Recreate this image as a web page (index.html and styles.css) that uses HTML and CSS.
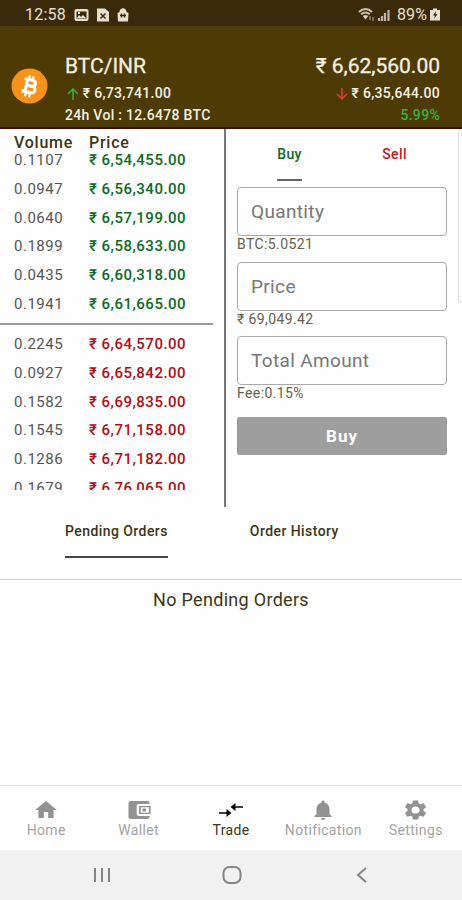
FILE: index.html
```html
<!DOCTYPE html>
<html lang="en">
<head>
    <meta charset="UTF-8">
    <meta name="viewport" content="width=device-width, initial-scale=1.0">
    <title>BTC/INR Trade</title>
    <link rel="stylesheet" href="styles.css">
</head>
<body>

    <div class="status">
        <span class="time">12:58</span>
        <svg width="15" height="14" viewBox="0 0 15 14"><rect x="0.5" y="1" width="14" height="12" rx="2" fill="#e6e0d2"/><path d="M2.500 3.500h10v7h-10z" fill="#3b2a09"/><path d="M3 10l2-3 2 2 2-2 3 3zM4 4h2v2H4z" fill="#e6e0d2"/></svg>
        <svg width="12" height="14" viewBox="0 0 12 14"><path d="M0 .5h8l4 3.500v9.500H0z" fill="#e6e0d2"/><path d="M3.500 5.500l5 5M8.500 5.500l-5 5" stroke="#3b2a09" stroke-width="1.500"/></svg>
        <svg width="12" height="14" viewBox="0 0 12 14"><path d="M.5 5l2-1c0-5 7-5 7 0l2 1-.5 8.500H1z" fill="#e6e0d2"/><path d="M3 7.500h6M4.500 5.500v4M7.500 5.500v4" stroke="#3b2a09" stroke-width="1.300"/></svg>
        <span class="fill"></span>
        <svg width="17" height="13" viewBox="0 0 17 13"><path d="M1 4c4-4 9-4 13 0M3.200 6.300c3-2.600 5.600-2.600 8.600 0" fill="none" stroke="#c9c0ae" stroke-width="2"/><path d="M4.800 8c2-1.300 3.400-1.300 5.400 0l-2.700 3.500z" fill="#d9d1c1"/><path d="M12 8v4M15 9v4" stroke="#8f8570" stroke-width="1.400"/></svg>
        <svg class="signal" width="12" height="12" viewBox="0 0 12 12"><path d="M1 12V9M4 12V7M7 12V4M10.500 12V1" stroke="#bdb5a3" stroke-width="2.200"/></svg>
        <span class="battery">89%</span>
        <svg width="10" height="13" viewBox="0 0 10 13"><path d="M0 2h3V.5h4V2h3v10.500H0z" fill="#e6e0d2"/><path d="M6 3L3 7.500h2L4 11l3.500-5H5.500z" fill="#3b2a09"/></svg>
    </div>

    <div class="header">
        <svg class="coin" width="37" height="36" viewBox="0 0 37 36">
            <ellipse cx="18.500" cy="18" rx="18" ry="17.500" fill="#f7931a"/>
            <g transform="rotate(13 18.500 18)" fill="none" stroke="#fff">
                <path d="M12 11.800h8c5 0 5 6 0 6h-5M15.300 11.800v12.500M12 24.300h8.500c5.500 0 5.500-6.700 0-6.700" stroke-width="3.200"/>
                <path d="M16.500 7.500v4M20.500 7.500v4M16.500 25v4M20.500 25v4" stroke-width="2.200"/>
            </g>
        </svg>
        <div class="pair">
            <div class="big">BTC/INR</div>
            <div class="small"><svg width="12" height="12" viewBox="0 0 12 12"><path d="M6 12V1M1 6l5-5 5 5" fill="none" stroke="#35b33c" stroke-width="1.500"/></svg> ₹ 6,73,741.00</div>
            <div class="small vol">24h Vol : 12.6478 BTC</div>
        </div>
        <div class="last">
            <div class="big">₹ 6,62,560.00</div>
            <div class="small"><svg width="12" height="12" viewBox="0 0 12 12"><path d="M6 0v11M1 6l5 5 5-5" fill="none" stroke="#e0402b" stroke-width="1.500"/></svg> ₹ 6,35,644.00</div>
            <div class="small change">5.99%</div>
        </div>
    </div>

    <div class="trade">
        <div class="book">
            <div class="row head"><span>Volume</span><span>Price</span></div>
            <div class="bids">
                <div class="row"><span>0.1107</span><b>₹ 6,54,455.00</b></div>
                <div class="row"><span>0.0947</span><b>₹ 6,56,340.00</b></div>
                <div class="row"><span>0.0640</span><b>₹ 6,57,199.00</b></div>
                <div class="row"><span>0.1899</span><b>₹ 6,58,633.00</b></div>
                <div class="row"><span>0.0435</span><b>₹ 6,60,318.00</b></div>
                <div class="row"><span>0.1941</span><b>₹ 6,61,665.00</b></div>
            </div>
            <div class="asks">
                <div class="row"><span>0.2245</span><b>₹ 6,64,570.00</b></div>
                <div class="row"><span>0.0927</span><b>₹ 6,65,842.00</b></div>
                <div class="row"><span>0.1582</span><b>₹ 6,69,835.00</b></div>
                <div class="row"><span>0.1545</span><b>₹ 6,71,158.00</b></div>
                <div class="row"><span>0.1286</span><b>₹ 6,71,182.00</b></div>
                <div class="row"><span>0.1679</span><b>₹ 6,76,065.00</b></div>
            </div>
        </div>
        <div class="form">
            <div class="tabs">
                <div class="tab buy active"><span>Buy</span></div>
                <div class="tab sell"><span>Sell</span></div>
            </div>
            <div class="field">Quantity</div>
            <div class="hint">BTC:5.0521</div>
            <div class="field">Price</div>
            <div class="hint">₹ 69,049.42</div>
            <div class="field total">Total Amount</div>
            <div class="hint">Fee:0.15%</div>
            <div class="button">Buy</div>
        </div>
        <div class="next-card"></div>
    </div>

    <div class="order-tabs">
        <span class="active">Pending Orders</span>
        <span>Order History</span>
    </div>
    <div class="orders">No Pending Orders</div>

    <div class="nav">
        <div class="item">
            <svg width="26" height="24" viewBox="0 0 24 24" preserveAspectRatio="none"><path d="M10 20v-6h4v6h5v-8h3L12 3 2 12h3v8z"/></svg>
            <span>Home</span>
        </div>
        <div class="item">
            <svg width="28" height="24" viewBox="0 0 24 24" preserveAspectRatio="none"><path d="M21 18v1c0 1.100-.9 2-2 2H5c-1.110 0-2-.9-2-2V5c0-1.100.89-2 2-2h14c1.100 0 2 .9 2 2v1h-9c-1.110 0-2 .9-2 2v8c0 1.100.89 2 2 2h9zm-9-2h10V8H12v8zm1.500-6.700h7v5.400h-7zM15 10.500v3h3v-3z" fill-rule="evenodd"/></svg>
            <span>Wallet</span>
        </div>
        <div class="item active">
            <svg width="26" height="24" viewBox="0 0 26 24"><path d="M15 9h10M1 15h10" stroke="#000" stroke-width="1.700"/><path d="M17.500 5v8l-5-4zM8.500 11v8l5-4z"/></svg>
            <span>Trade</span>
        </div>
        <div class="item">
            <svg width="26" height="24" viewBox="0 0 24 24" preserveAspectRatio="none"><path d="M12 22c1.100 0 2-.9 2-2h-4c0 1.100.9 2 2 2zm6-6v-5c0-3.070-1.640-5.640-4.500-6.320V4c0-.83-.67-1.500-1.500-1.500s-1.500.67-1.500 1.500v.68C7.630 5.360 6 7.920 6 11v5l-2 2v1h16v-1l-2-2z"/></svg>
            <span>Notification</span>
        </div>
        <div class="item">
            <svg width="27" height="25" viewBox="0 0 24 24" preserveAspectRatio="none"><path d="M19.140 12.940c.04-.3.060-.61.060-.94 0-.32-.02-.64-.07-.94l2.030-1.580c.18-.14.230-.41.120-.61l-1.920-3.320c-.12-.22-.37-.29-.59-.22l-2.390.96c-.5-.38-1.030-.7-1.620-.94l-.36-2.540c-.04-.24-.24-.41-.48-.41h-3.840c-.24 0-.43.170-.47.410l-.36 2.540c-.59.240-1.130.570-1.620.940l-2.390-.96c-.22-.08-.47 0-.59.220L2.740 8.870c-.12.210-.08.470.120.610l2.030 1.580c-.05.300-.09.630-.09.940s.02.640.07.940l-2.030 1.580c-.18.140-.23.410-.12.610l1.920 3.320c.12.220.37.290.59.220l2.390-.96c.5.380 1.030.7 1.620.940l.36 2.540c.05.240.24.410.48.410h3.840c.24 0 .44-.17.470-.41l.36-2.540c.59-.24 1.130-.56 1.620-.94l2.390.96c.22.080.47 0 .59-.22l1.920-3.320c.12-.22.070-.47-.12-.61l-2.010-1.580zM12 15.600a3.600 3.600 0 1 1 0-7.200 3.600 3.600 0 0 1 0 7.200z"/></svg>
            <span>Settings</span>
        </div>
    </div>

    <div class="system">
        <svg width="20" height="18" viewBox="0 0 20 18"><path d="M3 2v14M10 2v14M17 2v14"/></svg>
        <svg width="20" height="20" viewBox="0 0 20 20"><rect x="1.500" y="2" width="17" height="16" rx="6"/></svg>
        <svg width="20" height="18" viewBox="0 0 20 18"><path d="M14 2L6 9l8 7"/></svg>
    </div>

</body>
</html>
```
FILE: styles.css
```css
* {
    box-sizing: border-box;
}
body {
    margin: 0;
    height: 900px;
    display: flex;
    flex-direction: column;
    overflow: hidden;
    background: #fefefe;
    font-family: Roboto, sans-serif;
    color: #3d3515;
}
svg {
    flex: none;
}
.status {
    display: flex;
    align-items: center;
    gap: 8px;
    height: 26px;
    padding: 3px 22px 0 25px;
    background: #3b2a09;
    color: #e6e0d2;
    font-size: 16px;
}
.time {
    letter-spacing: 0.2px;
}
.fill {
    flex: 1;
}
.signal {
    margin-left: -5px;
}
.battery {
    margin-left: -1px;
    margin-right: -5px;
    font-size: 16px;
    letter-spacing: 0.1px;
}
.header {
    display: flex;
    height: 103px;
    padding: 26px 22px 0 11px;
    background: #4e3a05;
    border-bottom: 2px solid #3c0b05;
    color: #f5f0e4;
}
.coin {
    margin-top: 16px;
}
.pair {
    margin-left: 17px;
}
.last {
    margin-left: auto;
    text-align: right;
}
.big {
    height: 30px;
    line-height: 28px;
    font-size: 21px;
    font-weight: 400;
    -webkit-text-stroke: 0.3px;
}
.small {
    height: 22px;
    line-height: 22px;
    font-size: 14px;
    font-weight: 500;
    letter-spacing: 0.3px;
}
.small svg {
    margin-left: 2px;
    vertical-align: -2px;
}
.change {
    color: #35b33c;
}
.trade {
    display: flex;
    height: 378px;
}
.book {
    width: 226px;
    border-right: 2px solid #777;
}
.row {
    display: flex;
    height: 28.8px;
    line-height: 28.8px;
    padding-left: 14px;
    font-size: 15px;
    letter-spacing: 0.5px;
    color: #555;
}
.row span:first-child {
    width: 75px;
}
.row b {
    font-weight: 500;
}
.head {
    height: 17px;
    line-height: 27px;
    font-size: 16px;
    font-weight: 500;
    letter-spacing: 0.75px;
    color: #3d3515;
}
.bids {
    width: 213px;
    height: 179px;
    border-bottom: 2px solid #999;
}
.bids b {
    color: #0b6b25;
}
.asks {
    height: 165px;
    padding-top: 5px;
    overflow: hidden;
}
.asks b {
    color: #b00d16;
}
.form {
    width: 222px;
    padding: 0 1px 0 11px;
}
.tabs {
    display: flex;
    height: 58px;
}
.tab {
    flex: 1;
    text-align: center;
    font-size: 14px;
    font-weight: 500;
    letter-spacing: 0.4px;
}
.tab span {
    display: inline-block;
    height: 52px;
    line-height: 50px;
}
.tab.active span {
    padding: 0 0.5px;
    border-bottom: 2px solid #666;
}
.buy {
    color: #0b6b25;
}
.sell {
    color: #b81c24;
}
.field {
    height: 49px;
    line-height: 47px;
    padding-left: 13px;
    border: 1px solid #aaa;
    border-radius: 4px;
    font-size: 19px;
    letter-spacing: 0.35px;
    color: #777;
}
.hint {
    height: 25.5px;
    line-height: 16px;
    font-size: 14px;
    letter-spacing: 0.4px;
    color: #66614b;
}
.button {
    height: 38px;
    margin-top: 6px;
    line-height: 38px;
    border-radius: 2px;
    background: #9e9e9e;
    color: #fff;
    text-align: center;
    font-size: 17px;
    font-weight: 700;
    letter-spacing: 1px;
}
.next-card {
    flex: 1;
    height: 174px;
    margin-left: 10px;
    border: 1px solid #e0e0e0;
    border-right: 0;
    border-radius: 5px 0 0 5px;
}
.order-tabs {
    display: flex;
    gap: 82px;
    height: 73px;
    padding: 10px 0 0 65px;
    border-bottom: 1px solid #ccc;
    font-size: 14px;
    font-weight: 500;
    letter-spacing: 0.43px;
}
.order-tabs span {
    height: 41px;
    line-height: 29px;
}
.order-tabs .active {
    border-bottom: 2px solid #444;
}
.orders {
    flex: 1;
    padding-top: 8px;
    text-align: center;
    line-height: 24px;
    font-size: 18px;
    letter-spacing: 0.3px;
}
.nav {
    display: flex;
    height: 65px;
    border-top: 1px solid #e4e4e4;
    background: #fff;
}
.item {
    width: 20%;
    display: flex;
    flex-direction: column;
    align-items: center;
    padding-top: 12px;
    color: #a3a3a3;
    font-size: 14px;
    letter-spacing: 0.35px;
}
.item svg {
    height: 24px;
    fill: #929292;
}
.item span {
    line-height: 17px;
}
.item.active {
    color: #3d3515;
}
.item.active svg {
    fill: #000;
}
.system {
    display: flex;
    justify-content: center;
    align-items: center;
    gap: 110px;
    height: 50px;
    padding-left: 2px;
    background: #f1f1f1;
}
.system svg {
    fill: none;
    stroke: #858585;
    stroke-width: 2;
}
```
